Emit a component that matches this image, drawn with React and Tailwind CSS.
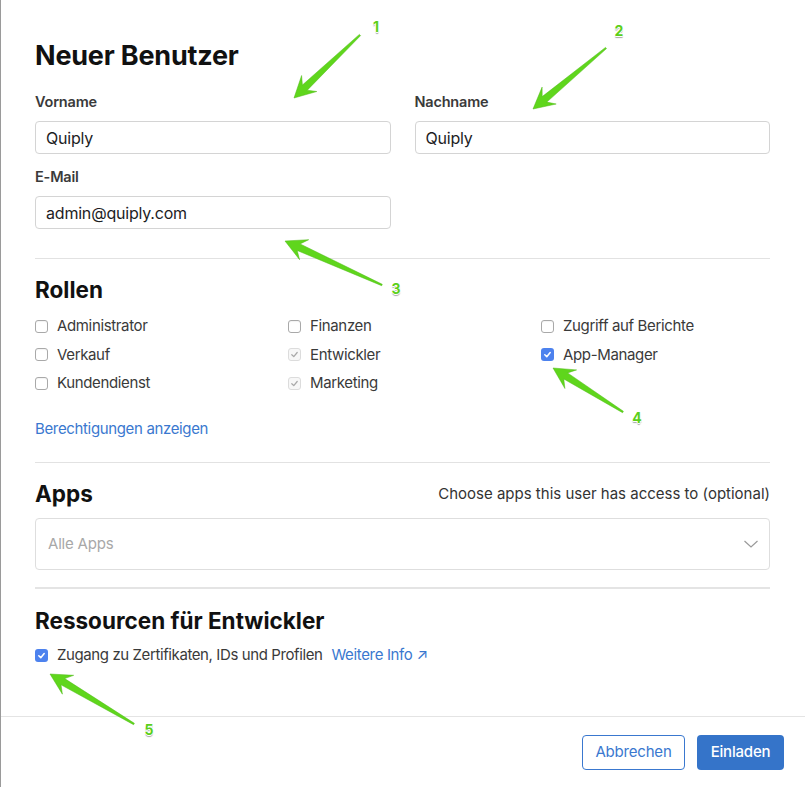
import React from "react";

function arrowPoints(tx, ty, hx, hy) {
  const dx = hx - tx, dy = hy - ty;
  const L = Math.hypot(dx, dy);
  const ux = dx / L, uy = dy / L;
  const nx = -uy, ny = ux;
  const headLen = 21, neck = 15, shaftW = 3.6, tailW = 0.8, barb = 11;
  const p = (x, y) => `${x.toFixed(1)},${y.toFixed(1)}`;
  const nxk = hx - ux * neck, nyk = hy - uy * neck;
  const bx = hx - ux * headLen, by = hy - uy * headLen;
  return [
    p(tx + nx * tailW, ty + ny * tailW),
    p(nxk + nx * shaftW, nyk + ny * shaftW),
    p(bx + nx * barb, by + ny * barb),
    p(hx, hy),
    p(bx - nx * barb, by - ny * barb),
    p(nxk - nx * shaftW, nyk - ny * shaftW),
    p(tx - nx * tailW, ty - ny * tailW),
  ].join(" ");
}

const arrows = [
  { t: [360, 35], h: [294, 98], n: "1", nx: 376, ny: 27 },
  { t: [606, 48], h: [533, 109], n: "2", nx: 619, ny: 31 },
  { t: [382, 285], h: [285, 241], n: "3", nx: 396, ny: 289 },
  { t: [623, 412], h: [553, 368], n: "4", nx: 637, ny: 418 },
  { t: [134, 724], h: [50, 674], n: "5", nx: 149, ny: 730 },
];

function Check({ state }) {
  if (state === "on") {
    return (
      <span className="flex h-[13px] w-[13px] shrink-0 items-center justify-center rounded-[3px] bg-[#4d82ee]">
        <svg width="9" height="9" viewBox="0 0 10 10">
          <path d="M2 5.3 L4.2 7.4 L8 2.8" fill="none" stroke="white" strokeWidth="1.7" strokeLinecap="round" strokeLinejoin="round" />
        </svg>
      </span>
    );
  }
  if (state === "dis") {
    return (
      <span className="flex h-[13px] w-[13px] shrink-0 items-center justify-center rounded-[3px] border border-[#dcdcdc] bg-[#f7f7f7]">
        <svg width="9" height="9" viewBox="0 0 10 10">
          <path d="M2 5.3 L4.2 7.4 L8 2.8" fill="none" stroke="#a8a8a8" strokeWidth="1.4" strokeLinecap="round" strokeLinejoin="round" />
        </svg>
      </span>
    );
  }
  return <span className="h-[13px] w-[13px] shrink-0 rounded-[3px] border border-[#a9a9a9] bg-white shadow-[inset_0_1px_1px_rgba(0,0,0,0.05)]" />;
}

function Role({ label, state }) {
  return (
    <div className="flex h-[20px] items-center gap-[9px]">
      <Check state={state} />
      <span className="text-[15px] leading-[20px] tracking-[-0.35px] text-[#3a3a3a]">{label}</span>
    </div>
  );
}

function Field({ label, value }) {
  return (
    <div className="flex flex-col">
      <label className="text-[14.5px] font-semibold leading-[20px] tracking-[-0.2px] text-[#3a3a3a]">{label}</label>
      <div className="mt-[9px] flex h-[33px] items-center rounded-[4px] border border-[#d4d4d4] px-[10px] text-[16px] tracking-[-0.2px] text-[#1d1d1f]">
        {value}
      </div>
    </div>
  );
}

export default function App() {
  return (
    <div className="relative flex h-[787px] w-[805px] flex-col overflow-hidden border-l border-[#9a9a9a] bg-white font-['Inter','Liberation_Sans',sans-serif]">
      <div className="flex-1 pl-[34px] pr-[35px] pt-[40px]">
        <h1 className="text-[27px] font-bold leading-[32px] tracking-[-0.2px] text-[#111]">Neuer Benutzer</h1>
        <div className="mt-[20px] grid grid-cols-2 gap-x-[24px]">
          <Field label="Vorname" value="Quiply" />
          <Field label="Nachname" value="Quiply" />
        </div>
        <div className="mt-[13px] grid grid-cols-2 gap-x-[24px]">
          <Field label="E-Mail" value="admin@quiply.com" />
        </div>
        <div className="mt-[29px] h-px bg-[#e2e2e2]" />

        <h2 className="mt-[17px] text-[22.5px] font-bold leading-[28px] text-[#111]">Rollen</h2>
        <div className="mt-[12px] grid grid-cols-[253px_253px_1fr] gap-y-[8.5px]">
          <Role label="Administrator" />
          <Role label="Finanzen" />
          <Role label="Zugriff auf Berichte" />
          <Role label="Verkauf" />
          <Role label="Entwickler" state="dis" />
          <Role label="App-Manager" state="on" />
          <Role label="Kundendienst" />
          <Role label="Marketing" state="dis" />
        </div>
        <a className="mt-[26px] block text-[15px] leading-[20px] tracking-[-0.35px] text-[#3a78cf]">Berechtigungen anzeigen</a>
        <div className="mt-[23px] h-px bg-[#e2e2e2]" />

        <div className="mt-[17px] flex items-center justify-between">
          <h2 className="text-[22.5px] font-bold leading-[28px] text-[#111]">Apps</h2>
          <span className="text-[15px] text-[#333]">Choose apps this user has access to (optional)</span>
        </div>
        <div className="mt-[10px] flex h-[52px] items-center justify-between rounded-[4px] border border-[#dedede] pl-[12px] pr-[10px]">
          <span className="text-[15px] tracking-[-0.2px] text-[#a8a8a8]">Alle Apps</span>
          <svg width="16" height="10" viewBox="0 0 16 10">
            <path d="M1.5 2 L8 8 L14.5 2" fill="none" stroke="#9a9a9a" strokeWidth="1.2" />
          </svg>
        </div>
        <div className="mt-[17px] h-[2px] bg-[#e4e4e4]" />

        <h2 className="mt-[18px] text-[22.5px] font-bold leading-[28px] text-[#111]">Ressourcen für Entwickler</h2>
        <div className="mt-[10px] flex h-[20px] items-center gap-[9px]">
          <Check state="on" />
          <span className="text-[15px] leading-[20px] tracking-[-0.4px] text-[#3a3a3a]">Zugang zu Zertifikaten, IDs und Profilen</span>
          <a className="text-[15px] leading-[20px] tracking-[-0.35px] text-[#3a78cf]">Weitere Info ↗</a>
        </div>
      </div>

      <div className="flex h-[71px] items-start justify-end gap-[12px] border-t border-[#e4e4e4] pr-[21px] pt-[18px]">
        <button className="h-[35px] w-[103px] rounded-[4px] border border-[#3a78cf] bg-white text-[15px] tracking-[-0.2px] text-[#3a78cf]">Abbrechen</button>
        <button className="h-[35px] w-[87px] rounded-[4px] bg-[#3574c9] text-[15px] font-medium tracking-[-0.2px] text-white">Einladen</button>
      </div>

      <svg className="pointer-events-none absolute left-[-1px] top-0" width="805" height="787">
        {arrows.map((a, i) => (
          <polygon key={i} points={arrowPoints(a.t[0], a.t[1], a.h[0], a.h[1])} fill="#5fd61c" stroke="#4fb816" strokeWidth="0.5" />
        ))}
      </svg>
      {arrows.map((a, i) => (
        <span
          key={i}
          className="pointer-events-none absolute -translate-x-1/2 -translate-y-1/2 text-[14px] font-bold leading-none text-[#5ccf1a] [text-shadow:0_1px_0_#fff,1px_0_0_#fff,-1px_0_0_#fff,0_-1px_0_#fff,0_2px_1px_rgba(0,0,0,0.35)]"
          style={{ left: a.nx - 1, top: a.ny }}
        >
          {a.n}
        </span>
      ))}
    </div>
  );
}
